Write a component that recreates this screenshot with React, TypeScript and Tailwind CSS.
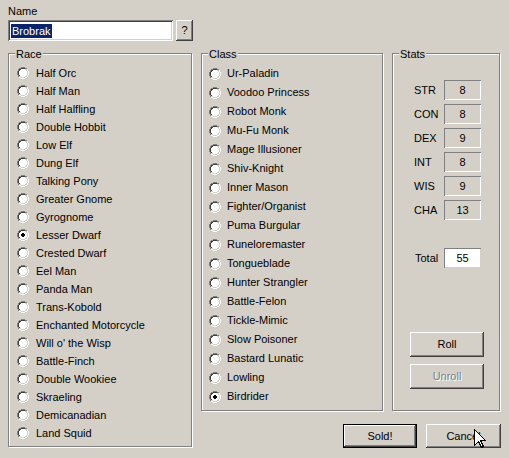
import React from "react";

const RADIO_MAP = [
  "....GGGG....",
  "..GGDDDDGG..",
  ".GDDWWWWLLH.",
  ".GDWWWWWWLH.",
  "GDWWWWWWWWLH",
  "GDWWWWWWWWLH",
  "GDWWWWWWWWLH",
  "GDWWWWWWWWLH",
  ".GDWWWWWWLH.",
  ".GLLWWWWLLH.",
  "..HHLLLLHH..",
  "....HHHH....",
];
const DOT = [
  "............",
  "............",
  "............",
  "............",
  ".....XX.....",
  "....XXXX....",
  "....XXXX....",
  ".....XX.....",
  "............",
  "............",
  "............",
  "............",
];
const COLORS: Record<string, string> = {
  G: "#808080",
  D: "#404040",
  H: "#ffffff",
  L: "#d4d0c8",
  W: "#ffffff",
  X: "#000000",
};

function Radio({ checked }: { checked?: boolean }) {
  const rects: React.ReactNode[] = [];
  RADIO_MAP.forEach((row, y) => {
    row.split("").forEach((c, x) => {
      let ch = c;
      if (checked && DOT[y][x] === "X") ch = "X";
      if (ch !== ".") {
        rects.push(<rect key={`${x}-${y}`} x={x} y={y} width={1} height={1} fill={COLORS[ch]} />);
      }
    });
  });
  return (
    <svg width={12} height={12} viewBox="0 0 12 12" shapeRendering="crispEdges" className="shrink-0">
      {rects}
    </svg>
  );
}

const races = [
  "Half Orc",
  "Half Man",
  "Half Halfling",
  "Double Hobbit",
  "Low Elf",
  "Dung Elf",
  "Talking Pony",
  "Greater Gnome",
  "Gyrognome",
  "Lesser Dwarf",
  "Crested Dwarf",
  "Eel Man",
  "Panda Man",
  "Trans-Kobold",
  "Enchanted Motorcycle",
  "Will o' the Wisp",
  "Battle-Finch",
  "Double Wookiee",
  "Skraeling",
  "Demicanadian",
  "Land Squid",
];

const classes = [
  "Ur-Paladin",
  "Voodoo Princess",
  "Robot Monk",
  "Mu-Fu Monk",
  "Mage Illusioner",
  "Shiv-Knight",
  "Inner Mason",
  "Fighter/Organist",
  "Puma Burgular",
  "Runeloremaster",
  "Tongueblade",
  "Hunter Strangler",
  "Battle-Felon",
  "Tickle-Mimic",
  "Slow Poisoner",
  "Bastard Lunatic",
  "Lowling",
  "Birdrider",
];

const stats: [string, string][] = [
  ["STR", "8"],
  ["CON", "8"],
  ["DEX", "9"],
  ["INT", "8"],
  ["WIS", "9"],
  ["CHA", "13"],
];

const btn =
  "flex items-center justify-center bg-[#d4d0c8] shadow-[inset_-1px_-1px_#404040,inset_1px_1px_#fff,inset_-2px_-2px_#808080]";

export default function App() {
  return (
    <div className="w-[509px] h-[458px] bg-[#d4d0c8] text-black text-[11px] leading-[13px] relative overflow-hidden font-['Liberation_Sans',Arial,sans-serif] select-none">
      {/* Name */}
      <div className="pl-[8px] pt-[5px]">
        <div className="h-[13px]">Name</div>
        <div className="mt-[2px] flex gap-[3px]">
          <div className="w-[165px] h-[21px] bg-white flex items-center pl-[3px] shadow-[inset_1px_1px_#808080,inset_-1px_-1px_#fff,inset_2px_2px_#404040,inset_-2px_-2px_#d4d0c8]">
            <span className="bg-[#0a246a] text-white leading-[14px] px-[1px]">Brobrak</span>
          </div>
          <div className={`w-[17px] h-[21px] ${btn}`}>?</div>
        </div>
      </div>

      {/* Main */}
      <div className="mt-[12px] flex items-start pl-[8px]">
        {/* Race */}
        <div className="relative w-[184px] h-[394px] border border-[#808080] shadow-[inset_1px_1px_#fff,1px_1px_#fff] pt-[10px] pl-[8px]">
          <span className="absolute top-[-6px] left-[6px] bg-[#d4d0c8] px-[1px] leading-[13px]">Race</span>
          {races.map((r, i) => (
            <div key={r} className="flex items-center h-[18px]">
              <Radio checked={i === 9} />
              <span className="ml-[7px] whitespace-nowrap">{r}</span>
            </div>
          ))}
        </div>

        {/* Right column */}
        <div className="ml-[9px] w-[300px] flex flex-col">
          <div className="flex items-start">
            {/* Class */}
            <div className="relative w-[182px] h-[358px] border border-[#808080] shadow-[inset_1px_1px_#fff,1px_1px_#fff] pt-[10px] pl-[7px]">
              <span className="absolute top-[-6px] left-[6px] bg-[#d4d0c8] px-[1px] leading-[13px]">Class</span>
              {classes.map((c, i) => (
                <div key={c} className="flex items-center h-[19px]">
                  <Radio checked={i === classes.length - 1} />
                  <span className="ml-[6px] whitespace-nowrap">{c}</span>
                </div>
              ))}
            </div>

            {/* Stats */}
            <div className="relative ml-[9px] w-[108px] h-[358px] border border-[#808080] shadow-[inset_1px_1px_#fff,1px_1px_#fff] pt-[26px] pl-[17px] flex flex-col">
              <span className="absolute top-[-6px] left-[6px] bg-[#d4d0c8] px-[1px] leading-[13px]">Stats</span>
              {stats.map(([k, v], i) => (
                <div key={k} className={`flex items-center h-[20px] pl-[4px] ${i > 0 ? "mt-[4px]" : ""}`}>
                  <span className="w-[30px]">{k}</span>
                  <div className="w-[37px] h-[20px] flex items-center justify-center pt-[1px] shadow-[inset_1px_1px_#808080,inset_-1px_-1px_#fff]">
                    {v}
                  </div>
                </div>
              ))}
              <div className="flex items-center h-[20px] pl-[5px] mt-[28px]">
                <span className="w-[29px]">Total</span>
                <div className="w-[37px] h-[20px] bg-white flex items-center justify-center pt-[1px] shadow-[inset_1px_1px_#808080,inset_-1px_-1px_#d4d0c8]">
                  55
                </div>
              </div>
              <div className={`mt-[64px] w-[74px] h-[25px] ${btn}`}>Roll</div>
              <div className={`mt-[7px] w-[74px] h-[25px] ${btn} text-[#808080] [text-shadow:1px_1px_#fff]`}>
                Unroll
              </div>
            </div>
          </div>

          {/* Bottom buttons */}
          <div className="mt-[13px] flex justify-end gap-[9px]">
            <div className="w-[74px] h-[24px] flex items-center justify-center bg-[#d4d0c8] border border-black shadow-[inset_-1px_-1px_#404040,inset_1px_1px_#fff,inset_-2px_-2px_#808080]">
              Sold!
            </div>
            <div className={`w-[75px] h-[24px] ${btn}`}>Cancel</div>
          </div>
        </div>
      </div>

      {/* Mouse cursor */}
      <svg
        className="absolute left-[474px] top-[429px]"
        width={13}
        height={20}
        viewBox="0 0 13 20"
        shapeRendering="crispEdges"
      >
        <path d="M0.5 0.5 L0.5 16.5 L4.5 12.5 L7.5 18.5 L9.5 17.5 L6.5 11.5 L11.5 11.5 Z" fill="#fff" stroke="#000" strokeWidth={1} />
      </svg>
    </div>
  );
}
